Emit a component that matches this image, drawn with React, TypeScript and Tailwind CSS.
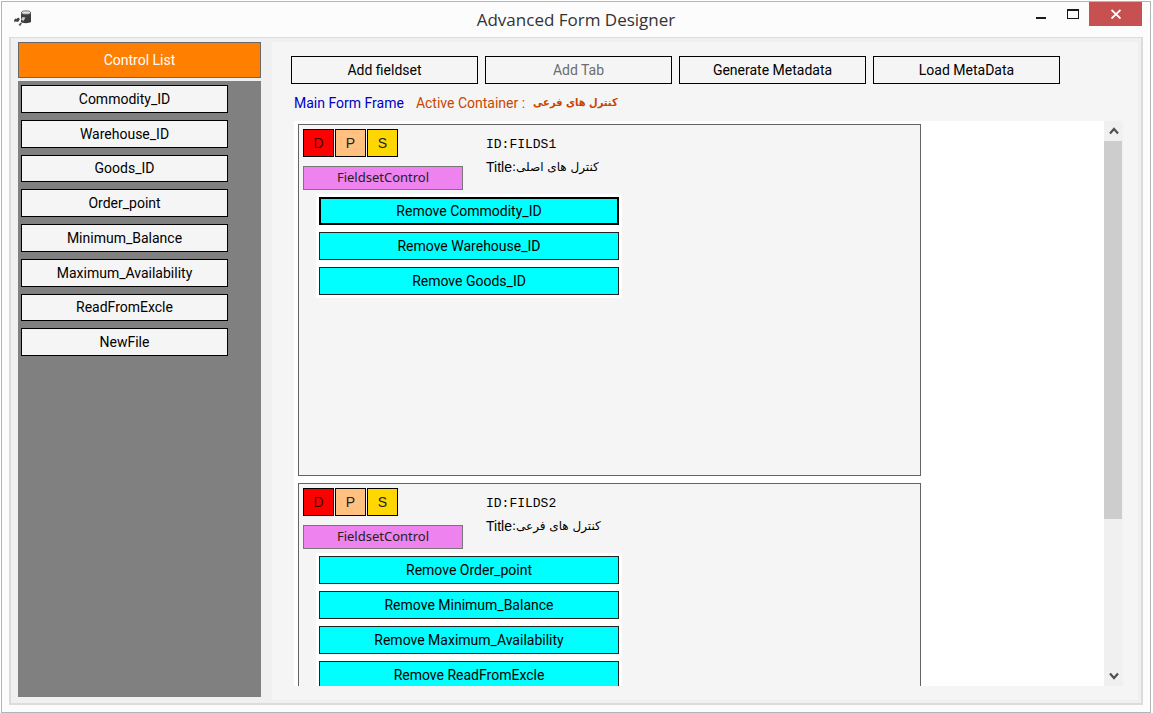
import { useState } from 'react';
import type { ReactNode } from 'react';

const controls = [
    'Commodity_ID',
    'Warehouse_ID',
    'Goods_ID',
    'Order_point',
    'Minimum_Balance',
    'Maximum_Availability',
    'ReadFromExcle',
    'NewFile',
];

interface FormFieldset {
    id: string;
    title: string;
    fields: string[];
}

const fieldsets: FormFieldset[] = [
    { id: 'FILDS1', title: 'کنترل های اصلی', fields: ['Commodity_ID', 'Warehouse_ID', 'Goods_ID'] },
    {
        id: 'FILDS2',
        title: 'کنترل های فرعی',
        fields: ['Order_point', 'Minimum_Balance', 'Maximum_Availability', 'ReadFromExcle'],
    },
];

function AppIcon() {
    return (
        <svg width="18" height="17" viewBox="0 0 18 17" aria-hidden="true">
            <path d="M7 3v9c1 1.500 8.500 1.500 10 0V3z" fill="#3c3c3c" />
            <path d="M7.500 2c1-1.500 8-1.500 9 0v1.500c-1 1-8 1-9 0z" fill="#e4e4e4" stroke="#666" strokeWidth="1" />
            <path d="M7 9.500l1.500-2.500 3 .5-2 3.500z" fill="#ccc" />
            <path d="M0 10l1.500-1.500 1 .5L4 7.500l2 1.500-2 3-2-.5-1.500.5z" fill="#444" />
            <path d="M4.500 15l2-2.500 1.500 1-2 2.500z" fill="#555" />
        </svg>
    );
}

function TitleBar() {
    return (
        <header className="grid h-[35px] shrink-0 grid-cols-[1fr_auto_1fr] items-start">
            <div className="pt-2 pl-3">
                <AppIcon />
            </div>
            <h1 className="font-['Open_Sans',sans-serif] text-[17px] leading-9 text-[#333]">Advanced Form Designer</h1>
            <div className="flex justify-end pr-2">
                <button aria-label="Minimize" className="flex h-6 w-8 items-center justify-center">
                    <svg width="12" height="12" viewBox="0 0 12 12" aria-hidden="true">
                        <path d="M1 9h10v2H1z" fill="#1a1a1a" />
                    </svg>
                </button>
                <button aria-label="Maximize" className="flex h-6 w-8 items-center justify-center">
                    <svg width="13" height="12" viewBox="0 0 13 12" aria-hidden="true">
                        <path d="M0 1h12v10H0zM1 3v7h10V3z" fill="#1a1a1a" fillRule="evenodd" />
                    </svg>
                </button>
                <button aria-label="Close" className="flex h-6 w-[53px] items-center justify-center bg-[#c75050]">
                    <svg width="10" height="10" viewBox="0 0 10 10" aria-hidden="true">
                        <path d="M.5 1l9 8.500M9.500 1l-9 8.500" stroke="#fff" strokeWidth="1.800" />
                    </svg>
                </button>
            </div>
        </header>
    );
}

function Sidebar() {
    return (
        <aside className="flex w-[243px] shrink-0 flex-col gap-[3px]">
            <h2 className="flex h-9 shrink-0 items-center justify-center border border-[#696969] bg-[#ff8000] text-sm text-white">
                Control List
            </h2>
            <div className="flex-1 bg-[#808080] px-[3px] py-1">
                <div className="grid h-[271px] w-[207px] auto-rows-fr gap-[7px]">
                    {controls.map((name) => (
                        <button key={name} className="border border-black bg-[#f5f5f5] text-sm leading-none">
                            {name}
                        </button>
                    ))}
                </div>
            </div>
        </aside>
    );
}

function ToolButton({ children, disabled }: { children: ReactNode; disabled?: boolean }) {
    return (
        <button
            disabled={disabled}
            className="h-7 w-[187px] border border-black bg-[#f5f5f5] text-sm leading-none disabled:text-[#6d6d6d]"
        >
            {children}
        </button>
    );
}

function FieldsetPanel({ fieldset, focused, onFocus }: { fieldset: FormFieldset; focused: string; onFocus: (name: string) => void }) {
    return (
        <section className="h-[352px] w-[623px] shrink-0 border border-[#646464] bg-[#f5f5f5] p-1">
            <div className="flex">
                <div className="w-[183px]">
                    <div className="flex gap-px font-['Liberation_Sans',sans-serif] text-sm">
                        <button className="h-7 w-[31px] border border-black bg-[#ff0000] text-[#400]">D</button>
                        <button className="h-7 w-[31px] border border-black bg-[#ffc080] text-[#222]">P</button>
                        <button className="h-7 w-[31px] border border-black bg-[#ffd700] text-[#222]">S</button>
                    </div>
                    <div className="mt-[9px] flex h-6 w-40 items-center justify-center border border-[#777] bg-[#ee82ee] font-['Noto_Sans',sans-serif] text-[13px] text-[#222]">
                        FieldsetControl
                    </div>
                </div>
                <div className="pt-1">
                    <p className="font-['Liberation_Mono',monospace] text-[13px] leading-6">ID:{fieldset.id}</p>
                    <p className="flex items-center font-['Liberation_Sans',sans-serif] text-sm leading-5">
                        Title
                        <bdi dir="rtl" className="font-['DejaVu_Sans',sans-serif] text-xs leading-5">
                            {fieldset.title}:
                        </bdi>
                    </p>
                </div>
            </div>
            <div className="mt-1 ml-[13px] flex w-[306px] flex-col gap-[7px] bg-white p-[3px]">
                {fieldset.fields.map((name) => (
                    <button
                        key={name}
                        onFocus={() => onFocus(name)}
                        className={
                            name === focused
                                ? 'h-7 border-2 border-black bg-[#00ffff] text-sm leading-none'
                                : 'h-7 border border-[#222] bg-[#00ffff] text-sm leading-none'
                        }
                    >
                        Remove {name}
                    </button>
                ))}
            </div>
        </section>
    );
}

function ScrollBar() {
    return (
        <div className="flex w-[19px] shrink-0 flex-col bg-[#f0f0f0]">
            <button aria-label="Scroll up" className="flex h-5 shrink-0 items-center justify-center">
                <svg width="10" height="8" viewBox="0 0 10 8" aria-hidden="true">
                    <path d="M1 6.500l4-4.500 4 4.500" fill="none" stroke="#505050" strokeWidth="2.200" />
                </svg>
            </button>
            <div className="flex-1">
                <div className="h-[72%] w-[18px] bg-[#cdcdcd]" />
            </div>
            <button aria-label="Scroll down" className="flex h-5 shrink-0 items-center justify-center">
                <svg width="10" height="8" viewBox="0 0 10 8" aria-hidden="true">
                    <path d="M1 1.500l4 4.500 4-4.500" fill="none" stroke="#505050" strokeWidth="2.200" />
                </svg>
            </button>
        </div>
    );
}

export default function App() {
    const [focused, setFocused] = useState('Commodity_ID');

    return (
        <div className="h-screen bg-white pt-px pr-0.5 pl-px font-['Roboto',sans-serif] text-black">
            <div className="flex h-full flex-col border border-[#b4b4b4] bg-[#fcfcfc]">
                <TitleBar />
                <div className="mx-[7px] mb-[7px] flex min-h-0 flex-1 gap-[11px] border-2 border-t border-[#dcdcdc] bg-[#f0f0f0] pt-1 pr-[3px] pl-[7px]">
                    <div className="flex pb-1.5">
                        <Sidebar />
                    </div>
                    <main className="mb-[3px] flex min-w-0 flex-1 flex-col bg-[#f5f5f5] pt-3.5 pr-[15px] pb-3.5 pl-[19px]">
                        <div className="flex shrink-0 gap-[7px]">
                            <ToolButton>Add fieldset</ToolButton>
                            <ToolButton disabled>Add Tab</ToolButton>
                            <ToolButton>Generate Metadata</ToolButton>
                            <ToolButton>Load MetaData</ToolButton>
                        </div>
                        <div className="flex h-[37px] shrink-0 items-center pl-[3px] text-sm">
                            <span className="text-[#0000c8]">Main Form Frame</span>
                            <span className="ml-3 text-[#c84600]">Active Container :</span>
                            <bdi dir="rtl" className="ml-2 font-['DejaVu_Sans_Condensed','DejaVu_Sans',sans-serif] text-[11px] font-bold text-[#c84600]">
                                کنترل های فرعی
                            </bdi>
                        </div>
                        <div className="ml-[3px] flex min-h-0 flex-1">
                            <div className="flex min-w-0 flex-1 flex-col gap-[7px] overflow-hidden bg-white pt-[3px] pl-1">
                                {fieldsets.map((fieldset) => (
                                    <FieldsetPanel key={fieldset.id} fieldset={fieldset} focused={focused} onFocus={setFocused} />
                                ))}
                            </div>
                            <ScrollBar />
                        </div>
                    </main>
                </div>
            </div>
        </div>
    );
}
